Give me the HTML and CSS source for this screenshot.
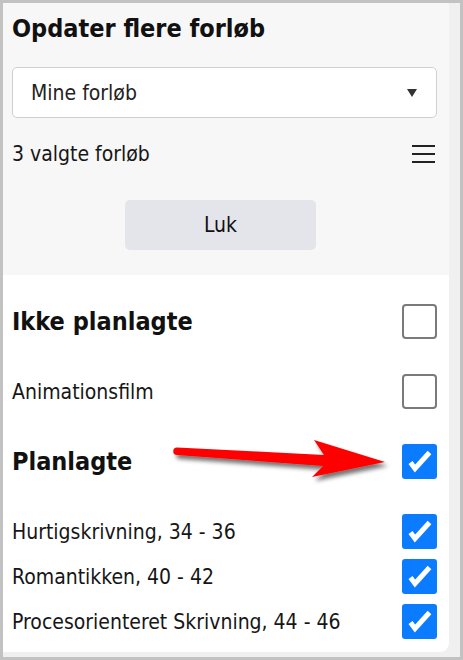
FILE: index.html
```html
<!DOCTYPE html>
<html lang="da">
<head>
<meta charset="utf-8">
<title>Opdater flere forløb</title>
<link rel="stylesheet" href="styles.css">
</head>
<body>
<div class="frame">
  <div class="panel">
    <div class="top">
      <h1 class="title">Opdater flere forløb</h1>
      <div class="select">
        <span class="select-text">Mine forløb</span>
        <span class="caret"></span>
      </div>
      <div class="count-row">
        <span class="count">3 valgte forløb</span>
        <span class="burger"><i></i><i></i><i></i></span>
      </div>
      <button class="close-btn" type="button">Luk</button>
    </div>
    <div class="list">
      <div class="row head">
        <span>Ikke planlagte</span>
        <span class="box"></span>
      </div>
      <div class="row">
        <span>Animationsfilm</span>
        <span class="box"></span>
      </div>
      <div class="row head">
        <span>Planlagte</span>
        <span class="box checked"><svg viewBox="0 0 35 35" width="35" height="35"><polyline points="8.5,18.5 13,24.5 27.5,8.5" /></svg></span>
      </div>
      <div class="group">
        <div class="row">
          <span>Hurtigskrivning, 34 - 36</span>
          <span class="box checked"><svg viewBox="0 0 35 35" width="35" height="35"><polyline points="8.5,18.5 13,24.5 27.5,8.5" /></svg></span>
        </div>
        <div class="row">
          <span>Romantikken, 40 - 42</span>
          <span class="box checked"><svg viewBox="0 0 35 35" width="35" height="35"><polyline points="8.5,18.5 13,24.5 27.5,8.5" /></svg></span>
        </div>
        <div class="row">
          <span>Procesorienteret Skrivning, 44 - 46</span>
          <span class="box checked"><svg viewBox="0 0 35 35" width="35" height="35"><polyline points="8.5,18.5 13,24.5 27.5,8.5" /></svg></span>
        </div>
      </div>
    </div>
  </div>
</div>
<svg class="arrow" viewBox="0 0 235 60" width="235" height="60">
  <defs>
    <filter id="sh" x="-10%" y="-40%" width="130%" height="200%">
      <feDropShadow dx="3" dy="4" stdDeviation="2.2" flood-color="#000" flood-opacity="0.55"/>
    </filter>
  </defs>
  <path d="M12,17.5 L159,25 L149,10 L220,32 L147,47 L158,36 L12,25 A3.75,3.75 0 0 1 12,17.5 Z" fill="#ff0000" filter="url(#sh)"/>
</svg>
</body>
</html>
```

FILE: styles.css
```css
html, body {
  margin: 0;
  padding: 0;
}
body {
  background: #c2c2c2;
  font-family: "DejaVu Sans Condensed", "DejaVu Sans", sans-serif;
  font-stretch: condensed;
  color: #161616;
  width: 463px;
  height: 660px;
  overflow: hidden;
  position: relative;
}
.frame {
  margin: 3px;
  height: 649px;
  padding-bottom: 5px;
  background: #f0f0f0;
  display: flex;
}
.panel {
  width: 446px;
  display: flex;
  flex-direction: column;
}
.top {
  background: #f7f7f7;
  padding: 11px 12px 25px 9px;
  display: flex;
  flex-direction: column;
}
.title {
  margin: 0;
  font-size: 25px;
  line-height: 30px;
  font-weight: bold;
  color: #111;
}
.select {
  margin-top: 23px;
  height: 49px;
  border: 1px solid #cfcfcf;
  border-radius: 5px;
  background: #fff;
  display: flex;
  align-items: center;
  justify-content: space-between;
  padding: 0 19px 0 18px;
}
.select-text {
  font-size: 21px;
  color: #222;
}
.caret {
  width: 0;
  height: 0;
  border-left: 5.5px solid transparent;
  border-right: 5.5px solid transparent;
  border-top: 8px solid #333;
}
.count-row {
  margin-top: 24px;
  height: 24px;
  display: flex;
  align-items: center;
  justify-content: space-between;
}
.count {
  font-size: 21px;
}
.burger {
  width: 23px;
  display: flex;
  flex-direction: column;
  gap: 6px;
  margin-right: 2px;
}
.burger i {
  display: block;
  height: 2px;
  background: #222;
}
.close-btn {
  margin-top: 34px;
  margin-left: 113px;
  width: 191px;
  height: 50px;
  border: 0;
  border-radius: 5px;
  background: #e4e5ea;
  font-family: inherit;
  font-stretch: condensed;
  font-size: 21px;
  color: #111;
  padding: 0;
}
.list {
  flex: 1;
  background: #fff;
  border-bottom-right-radius: 9px;
  padding: 29px 12px 0 9px;
  display: flex;
  flex-direction: column;
  gap: 35px;
}
.group {
  display: flex;
  flex-direction: column;
  gap: 10px;
}
.row {
  height: 35px;
  display: flex;
  align-items: center;
  justify-content: space-between;
  font-size: 21px;
}
.row.head {
  font-size: 25px;
  font-weight: bold;
  color: #111;
}
.box {
  width: 35px;
  height: 35px;
  box-sizing: border-box;
  border: 2px solid #7a7a7a;
  border-radius: 4px;
  background: #fff;
  flex: none;
}
.box.checked {
  border: 0;
  background: #0b7bff;
  border-radius: 3px;
}
.box svg {
  display: block;
}
.box polyline {
  fill: none;
  stroke: #fff;
  stroke-width: 5;
  stroke-linejoin: miter;
}
.arrow {
  position: absolute;
  left: 165px;
  top: 430px;
}
```
